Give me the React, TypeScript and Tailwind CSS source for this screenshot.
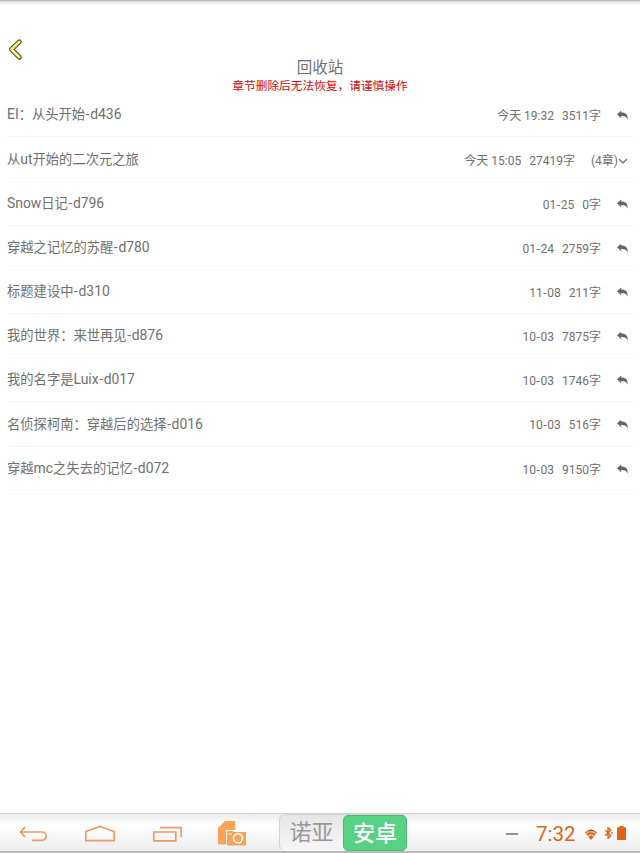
import { Fragment } from "react";

interface Chapter {
  title: string;
  date: string;
  words: string;
  count?: number;
}

const chapters: Chapter[] = [
  { title: "EI：从头开始-d436", date: "今天 19:32", words: "3511字" },
  { title: "从ut开始的二次元之旅", date: "今天 15:05", words: "27419字", count: 4 },
  { title: "Snow日记-d796", date: "01-25", words: "0字" },
  { title: "穿越之记忆的苏醒-d780", date: "01-24", words: "2759字" },
  { title: "标题建设中-d310", date: "11-08", words: "211字" },
  { title: "我的世界：来世再见-d876", date: "10-03", words: "7875字" },
  { title: "我的名字是Luix-d017", date: "10-03", words: "1746字" },
  { title: "名侦探柯南：穿越后的选择-d016", date: "10-03", words: "516字" },
  { title: "穿越mc之失去的记忆-d072", date: "10-03", words: "9150字" },
];

// Latin runs are set slightly larger than the Chinese text around them.
function Title({ text }: { text: string }) {
  return text
    .split(/([A-Za-z0-9-]+)/)
    .map((part, i) =>
      i % 2 ? (
        <span key={i} className="text-[13.9px]">
          <Dashed text={part} />
        </span>
      ) : (
        <Fragment key={i}>{part}</Fragment>
      )
    );
}

// Gives the hyphen a little air on both sides.
function Dashed({ text }: { text: string }) {
  return text.split("-").map((part, i) => (
    <Fragment key={i}>
      {i > 0 && <span className="px-[0.6px]">-</span>}
      {part}
    </Fragment>
  ));
}

function BackIcon() {
  return (
    <svg className="h-6 w-4" viewBox="0 0 16 24" fill="none" strokeLinecap="round" strokeLinejoin="round">
      <path d="M12.4 4.8 4.4 12.3l8 7.9" stroke="#4b4a3c" strokeWidth="4.8" />
      <path d="M12.4 4.8 4.4 12.3l8 7.9" stroke="#fcf87c" strokeWidth="2.6" />
    </svg>
  );
}

function ReplyIcon() {
  return (
    <svg className="mb-px ml-4 h-[11px] w-[11px]" viewBox="0 0 11 11" fill="#666">
      <path d="M0 4.2 4.2.5v2C8.8 2.5 11.3 4.5 10.4 9.8 9.5 6.8 7.8 6.1 4.2 6.1v2.1z" />
    </svg>
  );
}

function ChapterRow({ chapter }: { chapter: Chapter }) {
  return (
    <li className="flex h-[44.17px] items-center justify-between border-b border-[#f6f6f6] pr-[7px]">
      <span className="text-[13.3px] text-[#707070]">
        <Title text={chapter.title} />
      </span>
      <div className="flex items-center pt-[3px] text-[12px] text-[#707070]">
        <span>
          <Dashed text={chapter.date} />
        </span>
        <span className="ml-2">{chapter.words}</span>
        {chapter.count ? (
          <span className="ml-4 flex items-center">
            ({chapter.count}章)
            <svg className="h-[10px] w-[10px]" viewBox="0 0 10 10" fill="none" stroke="#666" strokeWidth="1.2">
              <path d="M1 3l4 4 4-4" />
            </svg>
          </span>
        ) : (
          <ReplyIcon />
        )}
      </div>
    </li>
  );
}

function SystemBar() {
  return (
    <footer className="flex h-10 items-center border-t border-b-2 border-t-[#d2d2d2] border-b-[#b9b9b9] bg-linear-to-b from-[#ebebeb] via-white via-30% to-[#ededed]">
      <svg className="mt-[4px] ml-[18px] h-6 w-8" viewBox="0 0 32 24" fill="none" stroke="#e99c67" strokeWidth="1.7">
        <path d="M7 4 2.5 9 7 14M2.5 9H24a4.2 4.2 0 0 1 0 8.4H14" />
      </svg>
      <svg className="mt-[4px] ml-[34px] h-6 w-8" viewBox="0 0 32 24" fill="none" stroke="#e99c67" strokeWidth="1.7">
        <path d="M1.8 8.5 16 3.5l14.2 5v9.2H1.8z" />
      </svg>
      <svg className="mt-[4px] ml-9 h-6 w-8" viewBox="0 0 32 24" fill="none" stroke="#e99c67" strokeWidth="1.7">
        <path d="M1.8 9h22v8.8h-22zM8 4.6h21.2v9.6" />
      </svg>
      <svg className="mt-[2px] ml-[33px] h-[27px] w-[30px]" viewBox="0 0 30 27">
        <path d="M8 1h9q1 0 1 1v8H9v14.5H2q-1 0-1-1V8z" fill="#f7a456" />
        <path d="M10 11h5.5l.8 1H29v13.5H10z" fill="#f7a456" />
        <circle cx="21" cy="18.2" r="4.5" fill="none" stroke="#fff" strokeWidth="1.6" />
        <path d="M11.5 14h3" stroke="#fff" fill="none" />
      </svg>
      <div className="ml-8 flex h-[37px] w-32 rounded-md border-l border-t border-[#d4d4d4] bg-linear-to-b from-[#e6e6e6] to-[#f6f6f6] text-[22px] leading-[35px]">
        <span className="w-[63px] text-center text-[#999]">诺亚</span>
        <span className="w-16 rounded-[5px] border border-[#50b777] bg-[#57d184] text-center font-medium text-white">安卓</span>
      </div>
      <span className="mt-[2px] ml-[99px] h-[2px] w-3 bg-[#929292]" />
      <span className="mt-1 ml-[18px] w-10 text-[20.5px] whitespace-nowrap text-[#d96519]">7:32</span>
      <svg className="mt-[2px] ml-[9px] h-3 w-3" viewBox="0 0 12 12" fill="none">
        <path d="M0 4.5Q6-1.5 12 4.5L6 12z" fill="#dc681d" />
        <path d="M3.5 2.5Q6 .8 8.5 2.5L6 4.2z" fill="#86401a" />
        <path d="M1.2 5.6q4.8-4 9.6 0M3 8q3-2.6 6 0" stroke="#fff" strokeWidth=".8" />
      </svg>
      <svg className="mt-[1px] ml-[7px] h-[12px] w-[9px]" viewBox="0 0 9 13" fill="none" stroke="#d96519" strokeWidth="1.5">
        <path d="M1 3.5l6 6-3 2.7V.8l3 2.7-6 6" />
        <path d="M7.2 6.5H9" />
      </svg>
      <svg className="mt-[1px] ml-[4px] h-[14px] w-[9px]" viewBox="0 0 9 14" fill="#dc6416">
        <path d="M2.5 0h4v1.3H9V14H0V1.3h2.5z" />
      </svg>
    </footer>
  );
}

export default function App() {
  return (
    <div className="flex h-[853px] w-[640px] flex-col overflow-hidden bg-white font-['Roboto','Noto_Sans_CJK_SC',sans-serif]">
      <div className="h-[5px] border-t border-[#b8b8b8] bg-linear-to-b from-[#dedede] to-white" />
      <header className="h-[88.3px] pt-8">
        <div className="pl-[7px]">
          <BackIcon />
        </div>
        <div className="-mt-[2px] text-center">
          <h1 className="text-[15.5px] leading-[19px] text-[#707070]">回收站</h1>
          <p className="text-[11.7px] leading-4 text-[#d20a0a]">章节删除后无法恢复，请谨慎操作</p>
        </div>
      </header>
      <ul className="flex-1 pr-[5px] pl-[7px]">
        {chapters.map((chapter) => (
          <ChapterRow key={chapter.title} chapter={chapter} />
        ))}
      </ul>
      <SystemBar />
    </div>
  );
}
